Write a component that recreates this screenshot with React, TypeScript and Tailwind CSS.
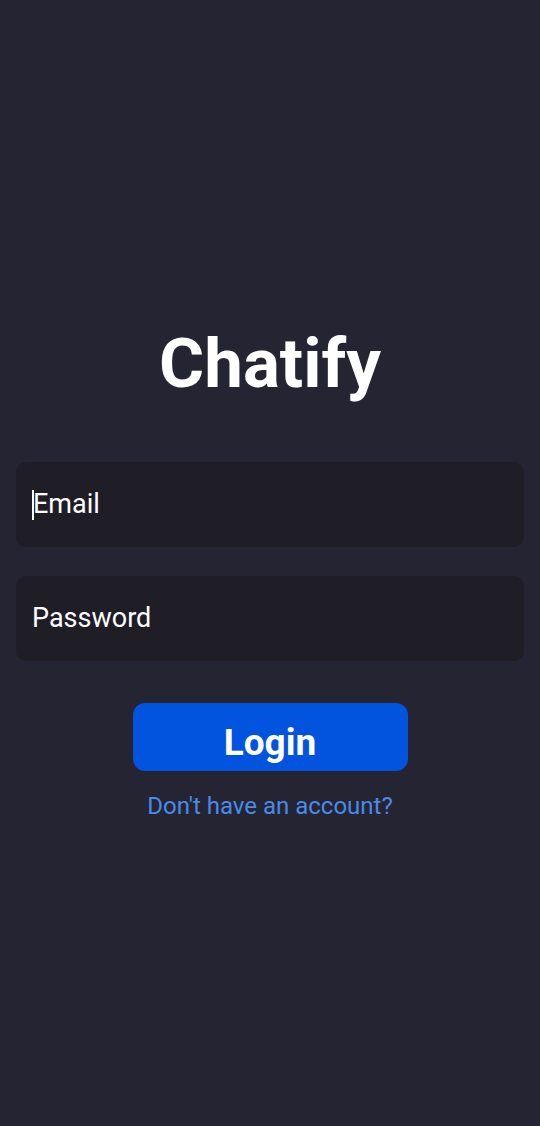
import React from "react";

export default function App() {
  return (
    <div
      className="w-[540px] h-[1126px] bg-[#242433] flex flex-col items-center px-4 pt-[324px]"
      style={{ fontFamily: "Roboto, 'Liberation Sans', sans-serif" }}
    >
      <h1 className="h-[80px] text-[69px] leading-[80px] font-bold text-white text-center">Chatify</h1>
      <div className="mt-[58px] w-full h-[85px] rounded-[10px] bg-[#1f1e27] flex items-center pl-[16px]">
        <span className="w-[2px] h-[30px] bg-white mr-[-1px]" />
        <span className="text-[27px] text-white">Email</span>
      </div>
      <div className="mt-[29px] w-full h-[85px] rounded-[10px] bg-[#1f1e27] flex items-center pl-[16px]">
        <span className="text-[27px] text-white">Password</span>
      </div>
      <button className="mt-[42px] w-[275px] h-[68px] rounded-[12px] bg-[#0253de] text-white text-[37px] font-bold flex items-center justify-center pt-[12px]">
        Login
      </button>
      <div className="mt-[22px] text-[24px] leading-[26px] text-[#4a8ae8]">Don't have an account?</div>
    </div>
  );
}
